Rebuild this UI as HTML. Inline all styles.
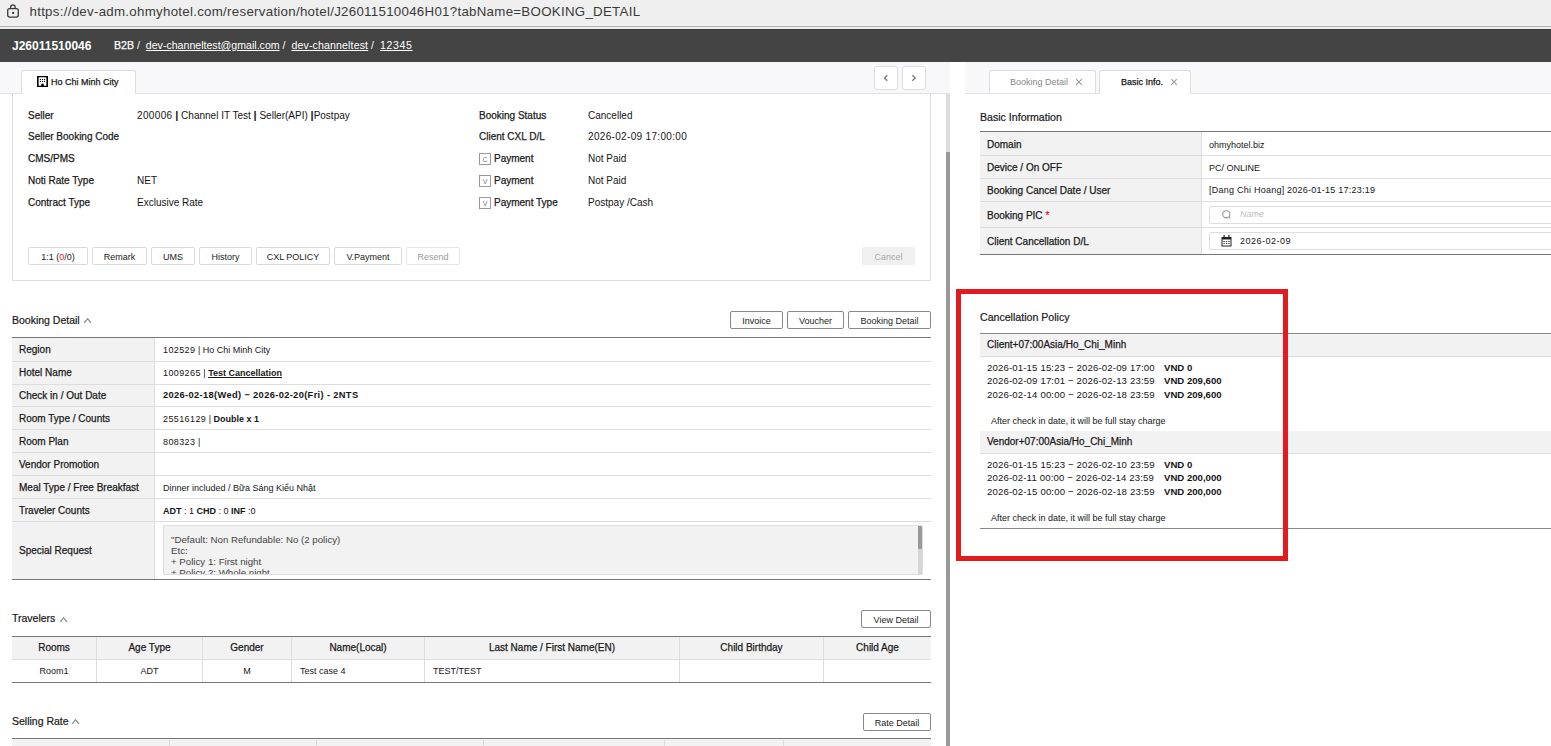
<!DOCTYPE html>
<html><head><meta charset="utf-8">
<style>
*{box-sizing:border-box;margin:0;padding:0}
html,body{width:1551px;height:746px;overflow:hidden;background:#fff;font-family:"Liberation Sans",sans-serif;color:#151515;font-size:10px}
.abs{position:absolute}
.t{position:absolute;white-space:nowrap;line-height:1}
#url{left:0;top:0;width:1551px;height:25px;background:#efefef}
#l25{left:0;top:25px;width:1551px;height:1px;background:#f3f3f3}
#l26{left:0;top:26px;width:1551px;height:1px;background:#b0b0b0}
#l27{left:0;top:27px;width:1551px;height:2px;background:#eee}
#hdr{left:0;top:29px;width:1551px;height:33px;background:#444;border-top:1px solid #3a3a3a}
.u{text-decoration:underline}
.band{background:#f8f7fa;height:31px;top:62px}
.btn{position:absolute;padding-top:1px;border:1px solid #d9d9d9;border-radius:2px;background:#fff;text-align:center;font-size:9px;color:#222;white-space:nowrap}
.btn2{position:absolute;padding-top:1px;border:1px solid #888;border-radius:2px;background:#fff;text-align:center;font-size:9px;color:#222;white-space:nowrap}
.lbl{-webkit-text-stroke:0.25px #1a1a1a;color:#1a1a1a}
.ttl{-webkit-text-stroke:0.2px #222}
</style></head><body>
<div id="url" class="abs"></div>
<div id="l25" class="abs"></div>
<div id="l26" class="abs"></div>
<div id="l27" class="abs"></div>
<div id="hdr" class="abs"></div>

<!-- URL bar -->
<svg class="abs" style="left:4px;top:2px" width="18" height="20" viewBox="0 0 18 20">
<path d="M6.65 6.7V5.2a2.25 2.25 0 0 1 4.5 0V6.7" fill="none" stroke="#3a3a3a" stroke-width="1.3"/>
<rect x="3.7" y="6.65" width="10.6" height="8.4" rx="2" fill="none" stroke="#3a3a3a" stroke-width="1.3"/>
<rect x="8.1" y="9.9" width="2" height="2" fill="#3a3a3a"/>
</svg>
<div class="t" style="left:29.5px;top:5px;font-size:13.3px;letter-spacing:0.28px;color:#3a3a3a">https://dev-adm.ohmyhotel.com/reservation/hotel/J26011510046H01?tabName=BOOKING_DETAIL</div>

<!-- header -->
<div class="t" style="left:12px;top:40px;font-size:12px;font-weight:bold;color:#fff">J26011510046</div>
<div class="t" style="left:114px;top:40px;font-size:10.6px;color:#fff"><span style="-webkit-text-stroke:0.25px #fff">B2B</span> /&nbsp; <span class="u">dev-channeltest@gmail.com</span> /&nbsp; <span class="u" style="letter-spacing:0.13px">dev-channeltest</span> /&nbsp; <span class="u" style="letter-spacing:0.65px">12345</span></div>

<!-- LEFT PANE -->
<div class="abs band" style="left:0;width:950px;border-bottom:1px solid #e3e3e3;height:32px"></div>
<div class="abs" style="left:21px;top:70px;width:115px;height:24px;background:#fff;border:1px solid #ddd;border-bottom:none;border-radius:3px 3px 0 0"></div>
<svg class="abs" style="left:37px;top:76px" width="11" height="11" viewBox="0 0 11 11">
<rect x="0" y="0" width="11" height="11" fill="#000"/>
<path d="M1.6 2.2a1 1 0 0 1 1-1h5.8a1 1 0 0 1 1 1V9.8H6.8V8.9a1.3 1.3 0 0 0-2.6 0V9.8H1.6Z" fill="#fff"/>
<circle cx="3.4" cy="3.4" r="0.6" fill="#000"/><circle cx="5.5" cy="3.4" r="0.6" fill="#000"/><circle cx="7.5" cy="3.4" r="0.6" fill="#000"/>
<circle cx="3.4" cy="5.4" r="0.6" fill="#000"/><circle cx="5.5" cy="5.4" r="0.6" fill="#000"/><circle cx="7.5" cy="5.4" r="0.6" fill="#000"/>
</svg>
<div class="t lbl" style="left:51px;top:78px;font-size:9px">Ho Chi Minh City</div>
<div class="abs" style="left:874px;top:66px;width:24px;height:24px;border:1px solid #ddd;border-radius:3px;background:#fff"></div>
<div class="abs" style="left:902px;top:66px;width:24px;height:24px;border:1px solid #ddd;border-radius:3px;background:#fff"></div>
<svg class="abs" style="left:874px;top:66px" width="24" height="24"><path d="M13.3 9.3L10.4 12L13.3 14.7" fill="none" stroke="#777" stroke-width="1.3"/></svg>
<svg class="abs" style="left:902px;top:66px" width="24" height="24"><path d="M10.3 9.3L13.2 12L10.3 14.7" fill="none" stroke="#777" stroke-width="1.3"/></svg>

<!-- scrollbar -->
<div class="abs" style="left:946px;top:94px;width:4px;height:652px;background:#ddd"></div>
<div class="abs" style="left:946px;top:152px;width:4px;height:594px;background:#999"></div>

<!-- info box -->
<div class="abs" style="left:12px;top:94px;width:919px;height:187px;border:1px solid #ddd;border-top:none"></div>


<!-- info rows -->
<div class="t lbl" style="left:28px;top:111px">Seller</div>
<div class="t" style="left:137px;top:111px"><span style="letter-spacing:0.35px">200006</span> <b style="font-size:11px;line-height:8px">|</b> Channel IT Test <b style="font-size:11px;line-height:8px">|</b> Seller(API) <b style="font-size:11px;line-height:8px">|</b>Postpay</div>
<div class="t lbl" style="left:28px;top:132px">Seller Booking Code</div>
<div class="t lbl" style="left:28px;top:154px">CMS/PMS</div>
<div class="t lbl" style="left:28px;top:176px">Noti Rate Type</div>
<div class="t" style="left:137px;top:176px">NET</div>
<div class="t lbl" style="left:28px;top:198px">Contract Type</div>
<div class="t" style="left:137px;top:198px">Exclusive Rate</div>

<div class="t lbl" style="left:479px;top:111px">Booking Status</div>
<div class="t" style="left:588px;top:111px">Cancelled</div>
<div class="t lbl" style="left:479px;top:132px">Client CXL D/L</div>
<div class="t" style="left:588px;top:132px;letter-spacing:0.33px">2026-02-09 17:00:00</div>
<div class="abs" style="left:479px;top:153px;width:12px;height:12px;border:1px solid #999;font-size:7px;color:#777;text-align:center;line-height:11px">C</div>
<div class="t lbl" style="left:494px;top:154px">Payment</div>
<div class="t" style="left:588px;top:154px">Not Paid</div>
<div class="abs" style="left:479px;top:175px;width:12px;height:12px;border:1px solid #999;font-size:7px;color:#777;text-align:center;line-height:11px">V</div>
<div class="t lbl" style="left:494px;top:176px">Payment</div>
<div class="t" style="left:588px;top:176px">Not Paid</div>
<div class="abs" style="left:479px;top:197px;width:12px;height:12px;border:1px solid #999;font-size:7px;color:#777;text-align:center;line-height:11px">V</div>
<div class="t lbl" style="left:494px;top:198px">Payment Type</div>
<div class="t" style="left:588px;top:198px">Postpay /Cash</div>

<div class="btn" style="left:28px;top:247px;width:60px;height:18px;line-height:16px">1:1 (<span style="color:#e8192c">0</span>/0)</div>
<div class="btn" style="left:92px;top:247px;width:55px;height:18px;line-height:16px">Remark</div>
<div class="btn" style="left:151px;top:247px;width:44px;height:18px;line-height:16px">UMS</div>
<div class="btn" style="left:199px;top:247px;width:53px;height:18px;line-height:16px">History</div>
<div class="btn" style="left:256px;top:247px;width:74px;height:18px;line-height:16px">CXL POLICY</div>
<div class="btn" style="left:334px;top:247px;width:68px;height:18px;line-height:16px">V.Payment</div>
<div class="btn" style="left:406px;top:247px;width:54px;height:18px;line-height:16px;color:#999;border-color:#e6e6e6">Resend</div>
<div class="btn" style="left:862px;top:247px;width:53px;height:18px;line-height:16px;color:#aaa;background:#f0f0f0;border-color:#f0f0f0">Cancel</div>


<!-- Booking Detail section -->
<div class="t ttl" style="left:12px;top:315px;font-size:10.5px">Booking Detail</div><svg class="abs" style="left:83px;top:317px" width="10" height="8"><path d="M1.3 5.8L4.6 1.7L7.9 5.8" fill="none" stroke="#8a8a8a" stroke-width="1.3"/></svg>
<div class="btn2" style="left:730px;top:311px;width:53px;height:18px;line-height:16px">Invoice</div>
<div class="btn2" style="left:787px;top:311px;width:57px;height:18px;line-height:16px">Voucher</div>
<div class="btn2" style="left:848px;top:311px;width:83px;height:18px;line-height:16px">Booking Detail</div>

<div class="abs" style="left:12px;top:338px;width:143px;height:241px;background:#f2f2f2;border-right:1px solid #ddd"></div>
<div class="abs" style="left:12px;top:337px;width:919px;height:1px;background:#777"></div>
<div class="abs" style="left:12px;top:361px;width:919px;height:1px;background:#ddd"></div>
<div class="abs" style="left:12px;top:384px;width:919px;height:1px;background:#ddd"></div>
<div class="abs" style="left:12px;top:406px;width:919px;height:1px;background:#ddd"></div>
<div class="abs" style="left:12px;top:429px;width:919px;height:1px;background:#ddd"></div>
<div class="abs" style="left:12px;top:452px;width:919px;height:1px;background:#ddd"></div>
<div class="abs" style="left:12px;top:475px;width:919px;height:1px;background:#ddd"></div>
<div class="abs" style="left:12px;top:498px;width:919px;height:1px;background:#ddd"></div>
<div class="abs" style="left:12px;top:521px;width:919px;height:1px;background:#ddd"></div>
<div class="abs" style="left:12px;top:579px;width:919px;height:1px;background:#777"></div>

<div class="t lbl" style="left:19px;top:345px">Region</div>
<div class="t" style="left:163px;top:346px;font-size:9px"><span style="letter-spacing:0.4px">102529</span> | Ho Chi Minh City</div>
<div class="t lbl" style="left:19px;top:368px">Hotel Name</div>
<div class="t" style="left:163px;top:369px;font-size:9px"><span style="letter-spacing:0.4px">1009265</span> | <b class="u">Test Cancellation</b></div>
<div class="t lbl" style="left:19px;top:391px">Check in / Out Date</div>
<div class="t" style="left:163px;top:391px;font-weight:bold;font-size:9.3px;letter-spacing:0.35px">2026-02-18(Wed) − 2026-02-20(Fri) - 2NTS</div>
<div class="t lbl" style="left:19px;top:414px">Room Type / Counts</div>
<div class="t" style="left:163px;top:415px;font-size:9px"><span style="letter-spacing:0.4px">25516129</span> | <b>Double x 1</b></div>
<div class="t lbl" style="left:19px;top:437px">Room Plan</div>
<div class="t" style="left:163px;top:438px;font-size:9px"><span style="letter-spacing:0.4px">808323</span> |</div>
<div class="t lbl" style="left:19px;top:460px">Vendor Promotion</div>
<div class="t lbl" style="left:19px;top:483px">Meal Type / Free Breakfast</div>
<div class="t" style="left:163px;top:484px;font-size:9px">Dinner included / Bữa Sáng Kiểu Nhật</div>
<div class="t lbl" style="left:19px;top:506px">Traveler Counts</div>
<div class="t" style="left:163px;top:507px;font-size:9px"><b>ADT</b> : 1 <b>CHD</b> : 0 <b>INF</b> :0</div>
<div class="t lbl" style="left:19px;top:546px">Special Request</div>
<div class="abs" style="left:163px;top:525px;width:760px;height:50px;background:#f2f2f2;border:1px solid #ddd;border-radius:2px;overflow:hidden">
<div style="position:absolute;left:7px;top:8px;font-size:9.7px;line-height:11px;color:#444;white-space:pre">"Default: Non Refundable: No (2 policy)
Etc:
+ Policy 1: First night
+ Policy 2: Whole night</div>
<div style="position:absolute;right:0;top:0;width:4px;height:48px;background:#d6d6d6"></div>
<div style="position:absolute;right:0;top:0;width:4px;height:23px;background:#999"></div>
</div>

<!-- Travelers -->
<div class="t ttl" style="left:12px;top:613px;font-size:10.5px">Travelers</div><svg class="abs" style="left:59px;top:616px" width="10" height="8"><path d="M1.3 5.8L4.6 1.7L7.9 5.8" fill="none" stroke="#8a8a8a" stroke-width="1.3"/></svg>
<div class="btn2" style="left:861px;top:610px;width:70px;height:18px;line-height:16px">View Detail</div>
<div class="abs" style="left:12px;top:636px;width:919px;height:1px;background:#777"></div>
<div class="abs" style="left:12px;top:637px;width:919px;height:23px;background:#f2f2f2;border-bottom:1px solid #ddd"></div>
<div class="abs" style="left:12px;top:682px;width:919px;height:1px;background:#777"></div>
<div class="abs" style="left:96px;top:637px;width:1px;height:45px;background:#ddd"></div>
<div class="abs" style="left:202px;top:637px;width:1px;height:45px;background:#ddd"></div>
<div class="abs" style="left:291px;top:637px;width:1px;height:45px;background:#ddd"></div>
<div class="abs" style="left:424px;top:637px;width:1px;height:45px;background:#ddd"></div>
<div class="abs" style="left:679px;top:637px;width:1px;height:45px;background:#ddd"></div>
<div class="abs" style="left:823px;top:637px;width:1px;height:45px;background:#ddd"></div>
<div class="t lbl" style="left:12px;width:84px;text-align:center;top:643px">Rooms</div>
<div class="t lbl" style="left:97px;width:105px;text-align:center;top:643px">Age Type</div>
<div class="t lbl" style="left:203px;width:88px;text-align:center;top:643px">Gender</div>
<div class="t lbl" style="left:292px;width:132px;text-align:center;top:643px">Name(Local)</div>
<div class="t lbl" style="left:425px;width:254px;text-align:center;top:643px">Last Name / First Name(EN)</div>
<div class="t lbl" style="left:680px;width:143px;text-align:center;top:643px">Child Birthday</div>
<div class="t lbl" style="left:824px;width:107px;text-align:center;top:643px">Child Age</div>
<div class="t" style="left:12px;width:84px;text-align:center;top:667px;font-size:9px">Room1</div>
<div class="t" style="left:97px;width:105px;text-align:center;top:667px;font-size:9px">ADT</div>
<div class="t" style="left:203px;width:88px;text-align:center;top:667px;font-size:9px">M</div>
<div class="t" style="left:300px;top:667px;font-size:9px">Test case 4</div>
<div class="t" style="left:433px;top:667px;font-size:9px">TEST/TEST</div>

<!-- Selling Rate -->
<div class="t ttl" style="left:12px;top:716px;font-size:10.5px">Selling Rate</div><svg class="abs" style="left:71px;top:718px" width="10" height="8"><path d="M1.3 5.8L4.6 1.7L7.9 5.8" fill="none" stroke="#8a8a8a" stroke-width="1.3"/></svg>
<div class="btn2" style="left:863px;top:713px;width:68px;height:18px;line-height:16px">Rate Detail</div>
<div class="abs" style="left:12px;top:738px;width:919px;height:1px;background:#777"></div>
<div class="abs" style="left:12px;top:739px;width:919px;height:7px;background:#f2f2f2"></div>
<div class="abs" style="left:169px;top:740px;width:1px;height:6px;background:#ddd"></div>
<div class="abs" style="left:316px;top:740px;width:1px;height:6px;background:#ddd"></div>
<div class="abs" style="left:483px;top:740px;width:1px;height:6px;background:#ddd"></div>
<div class="abs" style="left:664px;top:740px;width:1px;height:6px;background:#ddd"></div>
<div class="abs" style="left:783px;top:740px;width:1px;height:6px;background:#ddd"></div>


<!-- RIGHT PANE -->
<div class="abs band" style="left:965px;width:586px;border-bottom:1px solid #e3e3e3;height:32px"></div>
<div class="abs" style="left:989px;top:70px;width:107px;height:23px;background:#fff;border:1px solid #ddd;border-bottom:none;border-radius:3px 3px 0 0"></div>
<div class="t" style="left:1010px;top:78px;font-size:9px;color:#888">Booking Detail</div>
<svg class="abs" style="left:1075px;top:78px" width="8" height="8"><path d="M1.2 1.2L6.8 6.8M6.8 1.2L1.2 6.8" stroke="#999" stroke-width="1.1"/></svg>
<div class="abs" style="left:1099px;top:70px;width:92px;height:24px;background:#fff;border:1px solid #ddd;border-bottom:none;border-radius:3px 3px 0 0"></div>
<div class="t lbl" style="left:1121px;top:78px;font-size:9px;color:#111">Basic Info.</div>
<svg class="abs" style="left:1170px;top:78px" width="8" height="8"><path d="M1.2 1.2L6.8 6.8M6.8 1.2L1.2 6.8" stroke="#999" stroke-width="1.1"/></svg>

<div class="t ttl" style="left:980px;top:112px;font-size:10.6px">Basic Information</div>
<div class="abs" style="left:980px;top:132px;width:222px;height:122px;background:#f2f2f2;border-right:1px solid #ddd"></div>
<div class="abs" style="left:980px;top:131px;width:571px;height:1px;background:#777"></div>
<div class="abs" style="left:980px;top:155px;width:571px;height:1px;background:#ddd"></div>
<div class="abs" style="left:980px;top:178px;width:571px;height:1px;background:#ddd"></div>
<div class="abs" style="left:980px;top:201px;width:571px;height:1px;background:#ddd"></div>
<div class="abs" style="left:980px;top:227px;width:571px;height:1px;background:#ddd"></div>
<div class="abs" style="left:980px;top:254px;width:571px;height:1px;background:#777"></div>
<div class="t lbl" style="left:987px;top:140px">Domain</div>
<div class="t" style="left:1209px;top:141px;font-size:9px">ohmyhotel.biz</div>
<div class="t lbl" style="left:987px;top:163px">Device / On OFF</div>
<div class="t" style="left:1209px;top:164px;font-size:9px">PC/ ONLINE</div>
<div class="t lbl" style="left:987px;top:186px">Booking Cancel Date / User</div>
<div class="t" style="left:1209px;top:186px;font-size:9px;letter-spacing:0.24px">[Dang Chi Hoang] 2026-01-15 17:23:19</div>
<div class="t lbl" style="left:987px;top:211px">Booking PIC <span style="color:#e8192c;-webkit-text-stroke:0.25px #e8192c">*</span></div>
<div class="abs" style="left:1209px;top:206px;width:350px;height:18px;border:1px solid #ddd;border-radius:2px;background:#fff"></div>
<svg class="abs" style="left:1221px;top:209px" width="11" height="11"><circle cx="5.3" cy="5.3" r="3.6" fill="none" stroke="#999" stroke-width="1.1"/><path d="M7.9 7.9L9.3 9.3" stroke="#999" stroke-width="1.1"/></svg>
<div class="t" style="left:1240px;top:210px;font-size:9px;color:#bbb;font-style:italic">Name</div>
<div class="t lbl" style="left:987px;top:237px">Client Cancellation D/L</div>
<div class="abs" style="left:1209px;top:232px;width:350px;height:18px;border:1px solid #ddd;border-radius:2px;background:#fff"></div>
<svg class="abs" style="left:1221px;top:235px" width="11" height="12" viewBox="0 0 11 12"><rect x="0.5" y="2" width="10" height="9.5" fill="#222"/><rect x="1.5" y="4.5" width="8" height="6" fill="#fff"/><rect x="2.5" y="0" width="1.2" height="3" fill="#222"/><rect x="7.3" y="0" width="1.2" height="3" fill="#222"/><rect x="2.5" y="6" width="1.2" height="1" fill="#222"/><rect x="4.9" y="6" width="1.2" height="1" fill="#222"/><rect x="7.3" y="6" width="1.2" height="1" fill="#222"/><rect x="2.5" y="8" width="1.2" height="1" fill="#222"/><rect x="4.9" y="8" width="1.2" height="1" fill="#222"/><rect x="7.3" y="8" width="1.2" height="1" fill="#222"/></svg>
<div class="t" style="left:1240px;top:237px;font-size:9px;letter-spacing:0.5px">2026-02-09</div>

<!-- Cancellation policy -->
<div class="t ttl" style="left:980px;top:312px;font-size:10.6px">Cancellation Policy</div>
<div class="abs" style="left:980px;top:333px;width:571px;height:1px;background:#888"></div>
<div class="abs" style="left:980px;top:334px;width:571px;height:23px;background:#f2f2f2;border-bottom:1px solid #ddd"></div>
<div class="t lbl" style="left:987px;top:340px">Client+07:00Asia/Ho_Chi_Minh</div>
<div class="t" style="left:987px;top:363px;font-size:9.6px;letter-spacing:0.15px">2026-01-15 15:23 − 2026-02-09 17:00</div><div class="t" style="left:1164px;top:363px;font-size:9.6px;font-weight:bold">VND 0</div>
<div class="t" style="left:987px;top:376px;font-size:9.6px;letter-spacing:0.15px">2026-02-09 17:01 − 2026-02-13 23:59</div><div class="t" style="left:1164px;top:376px;font-size:9.6px;font-weight:bold">VND 209,600</div>
<div class="t" style="left:987px;top:390px;font-size:9.6px;letter-spacing:0.15px">2026-02-14 00:00 − 2026-02-18 23:59</div><div class="t" style="left:1164px;top:390px;font-size:9.6px;font-weight:bold">VND 209,600</div>
<div class="t" style="left:991px;top:417px;font-size:9px">After check in date, it will be full stay charge</div>
<div class="abs" style="left:980px;top:431px;width:571px;height:23px;background:#f2f2f2;border-bottom:1px solid #ddd"></div>
<div class="t lbl" style="left:987px;top:437px">Vendor+07:00Asia/Ho_Chi_Minh</div>
<div class="t" style="left:987px;top:460px;font-size:9.6px;letter-spacing:0.15px">2026-01-15 15:23 − 2026-02-10 23:59</div><div class="t" style="left:1164px;top:460px;font-size:9.6px;font-weight:bold">VND 0</div>
<div class="t" style="left:987px;top:473px;font-size:9.6px;letter-spacing:0.15px">2026-02-11 00:00 − 2026-02-14 23:59</div><div class="t" style="left:1164px;top:473px;font-size:9.6px;font-weight:bold">VND 200,000</div>
<div class="t" style="left:987px;top:487px;font-size:9.6px;letter-spacing:0.15px">2026-02-15 00:00 − 2026-02-18 23:59</div><div class="t" style="left:1164px;top:487px;font-size:9.6px;font-weight:bold">VND 200,000</div>
<div class="t" style="left:991px;top:514px;font-size:9px">After check in date, it will be full stay charge</div>
<div class="abs" style="left:980px;top:528px;width:571px;height:1px;background:#888"></div>

<!-- red box -->
<div class="abs" style="left:956px;top:289px;width:332px;height:272px;border:5px solid #e31b1f"></div>

</body></html>
